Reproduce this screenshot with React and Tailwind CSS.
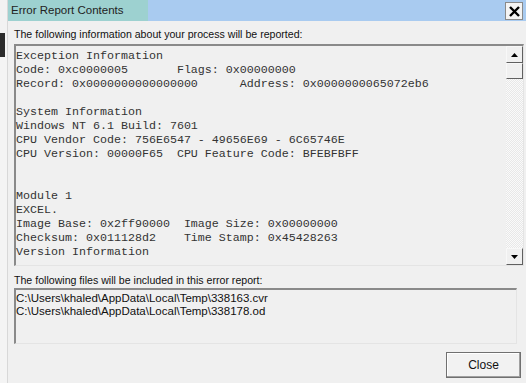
import React from "react";

const mono = { fontFamily: '"Liberation Mono", "Courier New", monospace' };
const sans = { fontFamily: '"Liberation Sans", Arial, sans-serif' };

const lines = [
  "Exception Information",
  "Code: 0xc0000005       Flags: 0x00000000",
  "Record: 0x0000000000000000      Address: 0x0000000065072eb6",
  "",
  "System Information",
  "Windows NT 6.1 Build: 7601",
  "CPU Vendor Code: 756E6547 - 49656E69 - 6C65746E",
  "CPU Version: 00000F65  CPU Feature Code: BFEBFBFF",
  "",
  "",
  "Module 1",
  "EXCEL.",
  "Image Base: 0x2ff90000  Image Size: 0x00000000",
  "Checksum: 0x011128d2    Time Stamp: 0x45428263",
  "Version Information",
];

function Arrow({ up }) {
  return (
    <svg width="7" height="4" viewBox="0 0 7 4">
      {up ? <path d="M0 4 L3.5 0 L7 4 Z" fill="#000" /> : <path d="M0 0 L3.5 4 L7 0 Z" fill="#000" />}
    </svg>
  );
}

export default function App() {
  return (
    <div className="w-[526px] h-[383px] bg-[#f0f0f0] flex overflow-hidden" style={sans}>
      <div className="w-[7px] shrink-0 bg-[#f4f4f4] flex flex-col">
        <div className="h-[33px] bg-[#f2f2f2]" />
        <div className="h-[24px] w-[5px] bg-[#2b2b2b]" />
      </div>
      <div className="flex-1 flex flex-col border-l border-[#d8d8d8]">
        <div className="h-[21px] flex bg-[#a9cbf0]">
          <div className="w-[140px] bg-[#9dd1d0] pl-[3px] flex items-center text-[11.5px] text-[#222]">Error Report Contents</div>
          <div className="flex-1" />
          <div className="mt-[2px] mr-[3px] w-[18px] h-[18px] bg-[#f4f4f4] border border-[#8a8a8a] flex items-center justify-center">
            <svg width="11" height="11" viewBox="0 0 11 11">
              <path d="M1 1 L10 10 M10 1 L1 10" stroke="#000" strokeWidth="2.4" />
            </svg>
          </div>
        </div>
        <div className="pl-[6px] pr-[2px] flex flex-col">
          <div className="h-[23px] pt-[7px] text-[10.6px] leading-[13px] text-[#111]">The following information about your process will be reported:</div>
          <div className="h-[222px] flex border-t-2 border-l-2 border-t-[#8a8a8a] border-l-[#8a8a8a] border-b border-r border-b-[#e4e4e4] border-r-[#e4e4e4]">
            <div className="flex-1 pt-[3px] text-[11.67px] leading-[14px] text-[#333] whitespace-pre" style={mono}>
              {lines.map((l, i) => (
                <div key={i} className="h-[14px]">{l}</div>
              ))}
            </div>
            <div className="w-[17px] flex flex-col bg-[repeating-conic-gradient(#e8e8e8_0_25%,#fafafa_0_50%)] bg-[length:2px_2px]">
              <div className="h-[17px] bg-[#f0f0f0] border border-[#f8f8f8] border-r-[#606060] border-b-[#606060] flex items-center justify-center"><Arrow up /></div>
              <div className="h-[16px] bg-[#f0f0f0] border border-[#f8f8f8] border-r-[#606060] border-b-[#606060]" />
              <div className="flex-1" />
              <div className="h-[17px] bg-[#f0f0f0] border border-[#f8f8f8] border-r-[#606060] border-b-[#606060] flex items-center justify-center"><Arrow /></div>
            </div>
          </div>
          <div className="h-[22px] pt-[8px] text-[10.6px] leading-[13px] text-[#111]">The following files will be included in this error report:</div>
          <div className="h-[56px] mr-[7px] border-t-2 border-l-2 border-t-[#8a8a8a] border-l-[#8a8a8a] border-b border-r border-b-[#e4e4e4] border-r-[#e4e4e4] pt-[2px] text-[11.5px] leading-[13px] text-[#111]">
            <div className="h-[13px]">C:\Users\khaled\AppData\Local\Temp\338163.cvr</div>
            <div className="h-[13px]">C:\Users\khaled\AppData\Local\Temp\338178.od</div>
          </div>
          <div className="flex justify-end pt-[8px] pr-[3px]">
            <div className="w-[75px] h-[26px] border border-[#707070] bg-[#f2f2f2] shadow-[inset_-1px_-1px_0_#a0a0a0,inset_1px_1px_0_#ffffff] flex items-center justify-center text-[12px] text-[#111]">Close</div>
          </div>
        </div>
      </div>
    </div>
  );
}
